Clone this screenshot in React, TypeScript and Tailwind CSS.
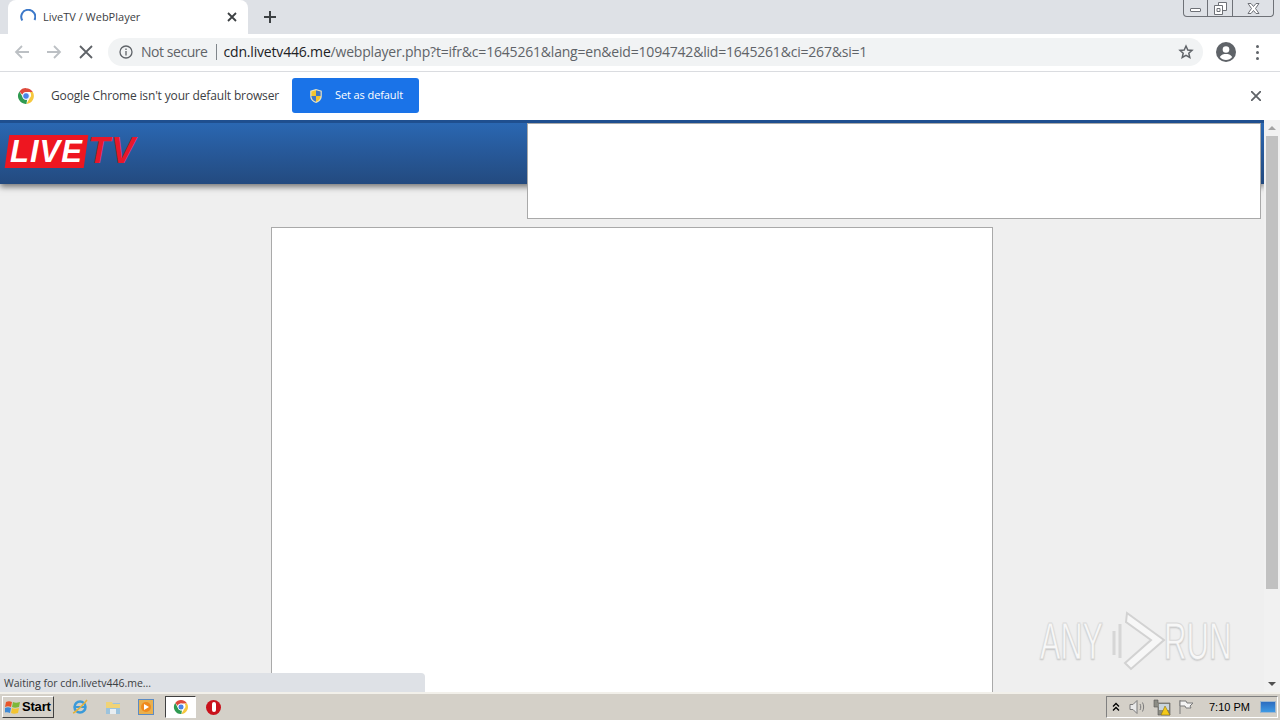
const ui = { fontFamily: '"Open Sans","Noto Sans",sans-serif' };

function ChromeLogo({ size }: { size: number }) {
  return (
    <svg width={size} height={size} viewBox="0 0 48 48">
      <path d="M24 3a21 21 0 0 1 18.2 10.5H24a10.500 10.500 0 0 0-9.900 7L6.600 12A21 21 0 0 1 24 3z" fill="#de4a3c" />
      <path d="M42.200 13.500A21 21 0 0 1 25 45l8.900-15.500a10.500 10.500 0 0 0 0-16z" fill="#f6c83e" />
      <path d="M25 45A21 21 0 0 1 6.600 12l8.800 15.500A10.500 10.500 0 0 0 27 34.100z" fill="#2f9a51" />
      <circle cx="24" cy="24" r="9" fill="#4a84e8" stroke="#fff" strokeWidth="2.500" />
    </svg>
  );
}

function Shield({ size }: { size: number }) {
  return (
    <svg width={size} height={size} viewBox="0 0 16 18">
      <path d="M8 1l6.500 2v6c0 4-3 6.500-6.500 8-3.500-1.500-6.500-4-6.500-8V3z" fill="#e9e4c4" />
      <path d="M8 2.500V9H2.800V4z" fill="#f4c430" />
      <path d="M8 2.500V9h5.200V4z" fill="#3f76c8" />
      <path d="M8 9v6.500C5 14.500 3 12.500 2.800 9z" fill="#3f76c8" />
      <path d="M8 9v6.500c3-1 5-3 5.200-6.500z" fill="#f4c430" />
    </svg>
  );
}

function Header() {
  return (
    <div className="relative z-10 flex h-[64px] shrink-0 justify-between border-t-[3px] border-[#1f4f8f] bg-gradient-to-b from-[#2a67b2] to-[#234a7f] pr-[3px] shadow-[0_3px_6px_rgba(0,0,0,0.5)]">
      <div className="mt-[12px] ml-[7px] flex h-[33px] items-start">
        <div className="flex h-[33px] w-[79px] skew-x-[-8deg] items-center justify-center bg-[#ee1620] leading-none">
          <span className="text-[31px] font-bold italic tracking-[1px] text-white skew-x-[8deg]" style={{ fontFamily: '"Liberation Sans",sans-serif' }}>LIVE</span>
        </div>
        <span className="ml-[2px] text-[36px] leading-[31px] font-bold italic tracking-[1px] text-[#e8182a]" style={{ fontFamily: '"Liberation Sans",sans-serif' }}>TV</span>
      </div>
      <div className="h-[96px] w-[734px] border border-[#a9a9a9] bg-white" />
    </div>
  );
}

function Watermark() {
  return (
    <div className="pointer-events-none absolute right-[48px] bottom-[19px] flex h-[64px] w-[192px] items-center justify-between text-[#f7f7f7] [text-shadow:0_1px_2px_#b5b5b5] [-webkit-text-stroke:1px_#d9d9d9]">
      <span className="w-[62px] origin-left scale-x-[0.59] text-[52px] leading-none" style={{ fontFamily: '"Liberation Sans",sans-serif' }}>ANY</span>
      <svg width="58" height="64" viewBox="0 0 58 64" fill="none" className="absolute left-[70px] top-0">
        <path d="M4 22v24M10 15v34" stroke="#d6d6d6" strokeWidth="3" />
        <path d="M17 4l37 27-33 29-6-6 26-23-25-18z" stroke="#d2d2d2" strokeWidth="2" fill="#f7f7f7" />
      </svg>
      <span className="w-[68px] origin-left scale-x-[0.6] text-[52px] leading-none" style={{ fontFamily: '"Liberation Sans",sans-serif' }}>RUN</span>
    </div>
  );
}

function Scrollbar() {
  return (
    <div className="flex w-[16px] flex-col items-center bg-[#f1f1f1]">
      <div className="flex h-[16px] w-full items-center justify-center">
        <div className="h-0 w-0 border-x-[4px] border-b-[4px] border-x-transparent border-b-[#a3a3a3]" />
      </div>
      <div className="h-[453px] w-[12px] bg-[#c1c1c1]" />
      <div className="mt-auto flex h-[16px] w-full items-center justify-center">
        <div className="h-0 w-0 border-x-[4px] border-t-[4px] border-x-transparent border-t-[#505050]" />
      </div>
    </div>
  );
}

function Taskbar() {
  return (
    <div className="flex h-[28px] items-center justify-between border-t-2 border-[#f2f0ea] bg-[#d4d0c8] pr-[2px] pl-[2px]">
      <div className="flex items-center">
        <div className="flex h-[22px] w-[52px] items-center gap-[1px] border border-t-white border-l-white border-r-[#404040] border-b-[#404040] pl-[2px] text-[13px] font-bold tracking-[-0.2px] text-black" style={{ fontFamily: '"Liberation Sans",sans-serif' }}>
          <svg width="16" height="16" viewBox="0 0 16 16">
            <path d="M1 3c2-1 4-1 6 0l-1 5c-2-1-4-1-6 0z" fill="#e8562a" />
            <path d="M8 3c2 1 4 1 7 0l-1 5c-3 1-5 1-7 0z" fill="#7db83a" />
            <path d="M0 9c2-1 4-1 6 0l-1 5c-2-1-4-1-6 0z" fill="#3e8ad6" />
            <path d="M7 9c2 1 4 1 7 0l-1 5c-3 1-5 1-7 0z" fill="#f3c431" />
          </svg>
          Start
        </div>
        <div className="ml-[17px] flex h-[22px] items-center">
          <svg width="18" height="18" viewBox="0 0 18 18" fill="none">
            <circle cx="9" cy="9" r="5.500" stroke="#3a9ad9" strokeWidth="2.500" />
            <path d="M4 9h10" stroke="#3a9ad9" strokeWidth="2" />
            <path d="M2 15C5 14 13 6 16 2" stroke="#e3b23c" strokeWidth="1.500" />
          </svg>
          <svg width="16" height="16" viewBox="0 0 16 16" className="ml-[16px]">
            <path d="M1 4h14v11H1z" fill="#9cc3dd" />
            <path d="M1 3h6l1 2h7v4H1z" fill="#f0d377" />
            <path d="M5 10h6v5H5z" fill="#e8eef2" />
          </svg>
          <div className="ml-[17px] flex h-[16px] w-[16px] items-center justify-center border border-[#5b8bc4] bg-[#e9b04e]">
            <div className="flex h-[10px] w-[10px] items-center justify-center rounded-full bg-[#f08a1d]">
              <div className="h-0 w-0 border-y-[3px] border-l-[5px] border-y-transparent border-l-white" />
            </div>
          </div>
          <div className="ml-[11px] flex h-[22px] w-[31px] items-center justify-center border border-t-[#404040] border-l-[#404040] border-r-white border-b-white bg-white">
            <ChromeLogo size={16} />
          </div>
          <div className="ml-[10px] flex h-[15px] w-[15px] items-center justify-center rounded-full bg-[#c9111b]">
            <div className="h-[10px] w-[4px] rounded-full bg-white" />
          </div>
        </div>
      </div>
      <div className="flex h-[22px] w-[172px] items-center border border-t-[#808080] border-l-[#808080] border-r-white border-b-white pl-[5px] text-[11px] text-black" style={{ fontFamily: '"Liberation Sans",sans-serif' }}>
        <svg width="8" height="10" viewBox="0 0 8 10" fill="none" stroke="#000" strokeWidth="1.300">
          <path d="M1 4.500l3-3 3 3M1 8.500l3-3 3 3" />
        </svg>
        <svg width="18" height="16" viewBox="0 0 18 16" fill="none" stroke="#7b7b7b" className="ml-[9px]">
          <path d="M1 5.500h3l4-4v13l-4-4H1z" fill="#e9e9e9" />
          <path d="M11 5c1 2 1 4 0 6M13.500 3.500c1.500 3 1.500 6 0 9" />
        </svg>
        <svg width="18" height="18" viewBox="0 0 18 18" className="ml-[6px]">
          <path d="M1 2h4v3h12v12H5V9H1z" fill="#8c8c84" stroke="#555" strokeWidth="0.600" />
          <path d="M6 6h10v6H6z" fill="#c9d4dc" />
          <path d="M12 8l5 9H8z" fill="#f4c918" stroke="#7a6508" strokeWidth="0.500" />
        </svg>
        <svg width="16" height="16" viewBox="0 0 16 16" fill="#f4f4f4" stroke="#7b7b7b" className="ml-[7px]">
          <path d="M2 1v14" />
          <path d="M2 2h6l1 2h6l-3 3 1 2H8L7 7H2z" />
        </svg>
        <span className="ml-[15px] whitespace-nowrap">7:10 PM</span>
        <div className="ml-[10px] h-[12px] w-[16px] border border-[#9fb7cf] bg-gradient-to-b from-[#2c6cc0] to-[#3f9ae4]" />
      </div>
    </div>
  );
}

export default function App() {
  return (
    <div className="flex h-[720px] w-[1280px] flex-col overflow-hidden bg-white" style={ui}>
      <div className="relative flex h-[34px] items-start bg-[#dee1e6] pl-[8px]">
        <div className="flex h-[34px] w-[240px] items-center rounded-t-[8px] bg-white pl-[12px] pr-[8px] text-[11px] text-[#3c4043]">
          <svg width="16" height="16" viewBox="0 0 16 16" fill="none">
            <path d="M2.300 11.500A7 7 0 1 1 14.500 11" stroke="#3b78c9" strokeWidth="2" />
          </svg>
          <span className="ml-[7px] grow">LiveTV / WebPlayer</span>
          <svg width="10" height="10" viewBox="0 0 10 10" stroke="#3c4043" strokeWidth="1.800" className="mr-[3px]">
            <path d="M1 1l8 8M9 1l-8 8" />
          </svg>
        </div>
        <svg width="12" height="12" viewBox="0 0 12 12" stroke="#3c4043" strokeWidth="2" className="mt-[11px] ml-[16px]">
          <path d="M6 0v12M0 6h12" />
        </svg>
        <div className="ml-auto mr-[6px] flex h-[17px] w-[91px] rounded-b-[4px] border border-t-0 border-[#6e7177]">
          <div className="flex w-[24px] items-end justify-center border-r border-[#6e7177] pb-[4px]">
            <div className="h-[4px] w-[11px] rounded-[1px] border border-[#6e7177] bg-white" />
          </div>
          <div className="flex w-[25px] items-center justify-center border-r border-[#6e7177]">
            <svg width="13" height="13" viewBox="0 0 13 13" fill="#fff" stroke="#6e7177">
              <path d="M4.500 .5h8v8h-8z" />
              <path d="M.5 3.500h8v9h-8z" />
              <path d="M3 6.500h3v3H3z" />
            </svg>
          </div>
          <div className="flex grow items-center justify-center">
            <svg width="13" height="11" viewBox="0 0 13 11" fill="#fff" stroke="#6e7177">
              <path d="M1 .5h3l2.500 3 2.500-3h3L8.500 5.500l3.500 5H9l-2.500-3-2.500 3H1l3.500-5z" />
            </svg>
          </div>
        </div>
      </div>

      <div className="flex h-[38px] items-center border-b border-[#dadce0] bg-white pb-[1px]">
        <svg width="16" height="14" viewBox="0 0 16 14" fill="none" stroke="#bcc0c4" strokeWidth="1.800" className="ml-[14px]">
          <path d="M15 7H2M8 1L2 7l6 6" />
        </svg>
        <svg width="16" height="14" viewBox="0 0 16 14" fill="none" stroke="#bcc0c4" strokeWidth="1.800" className="ml-[16px]">
          <path d="M1 7h13M8 1l6 6-6 6" />
        </svg>
        <svg width="14" height="14" viewBox="0 0 14 14" stroke="#5f6368" strokeWidth="1.800" className="ml-[17px]">
          <path d="M1 1l12 12M13 1L1 13" />
        </svg>
        <div className="ml-[15px] flex h-[28px] w-[1095px] items-center rounded-full bg-[#f1f3f4] pl-[11px] pr-[9px]">
          <svg width="14" height="14" viewBox="0 0 14 14" fill="none" stroke="#5f6368" strokeWidth="1.300">
            <circle cx="7" cy="7" r="6" />
            <path d="M7 6v4.500M7 3.500v1.500" />
          </svg>
          <span className="ml-[8px] pb-[2px] text-[14px] tracking-[-0.45px] text-[#5f6368]">Not secure</span>
          <div className="ml-[8px] h-[16px] w-px bg-[#80868b]" />
          <span className="ml-[7px] pb-[2px] text-[14px] whitespace-nowrap text-[#5f6368]">
            <span className="tracking-[-0.18px] text-[#202124]">cdn.livetv446.me</span>
            <span className="tracking-[-0.2px]">/webplayer.php?t=ifr&amp;c=1645261&amp;lang=en&amp;eid=1094742&amp;lid=1645261&amp;ci=267&amp;si=1</span>
          </span>
          <svg width="16" height="16" viewBox="0 0 24 24" fill="none" stroke="#5f6368" strokeWidth="2.200" className="ml-auto">
            <path d="M12 3l2.700 6 6.300.6-4.800 4.200 1.500 6.400L12 17l-5.700 3.200 1.500-6.400L3 9.600 9.300 9z" />
          </svg>
        </div>
        <svg width="20" height="20" viewBox="0 0 20 20" className="ml-[13px]">
          <circle cx="10" cy="10" r="10" fill="#5f6368" />
          <circle cx="10" cy="7.500" r="3.300" fill="#fff" />
          <path d="M3.800 15c1.500-2.500 4-3 6.200-3s4.700.5 6.200 3c-1.500 2-3.700 3-6.200 3s-4.700-1-6.200-3z" fill="#fff" />
        </svg>
        <div className="ml-[20px] flex flex-col gap-[3px]">
          <div className="h-[3px] w-[3px] rounded-full bg-[#5f6368]" />
          <div className="h-[3px] w-[3px] rounded-full bg-[#5f6368]" />
          <div className="h-[3px] w-[3px] rounded-full bg-[#5f6368]" />
        </div>
      </div>

      <div className="flex h-[48px] items-center bg-white pb-[1px] pl-[17px] pr-[19px]">
        <ChromeLogo size={18} />
        <span className="ml-[16px] text-[12px] tracking-[-0.15px] text-[#3c4043]">Google Chrome isn't your default browser</span>
        <div className="ml-[13px] flex h-[35px] w-[127px] items-center rounded-[3px] bg-[#1a73e8] pl-[16px] text-[11px] tracking-[-0.1px] text-white">
          <Shield size={16} />
          <span className="ml-[11px]">Set as default</span>
        </div>
        <svg width="10" height="10" viewBox="0 0 10 10" stroke="#5f6368" strokeWidth="1.800" className="ml-auto mt-[1px]">
          <path d="M0 0l10 10M10 0L0 10" />
        </svg>
      </div>

      <div className="relative flex h-[572px]">
        <div className="flex w-[1264px] flex-col overflow-hidden bg-[#efefef]">
          <Header />
          <div className="mx-auto mt-[43px] h-[500px] w-[722px] shrink-0 border border-[#a9a9a9] bg-white" />
        </div>
        <Scrollbar />
        <Watermark />
        <div className="absolute bottom-0 left-0 flex h-[19px] w-[425px] items-center rounded-tr-[4px] bg-[#dee1e6] pt-[2px] pl-[4px] text-[10.5px] text-[#3c4043]">
          Waiting for cdn.livetv446.me...
        </div>
      </div>

      <Taskbar />
    </div>
  );
}
